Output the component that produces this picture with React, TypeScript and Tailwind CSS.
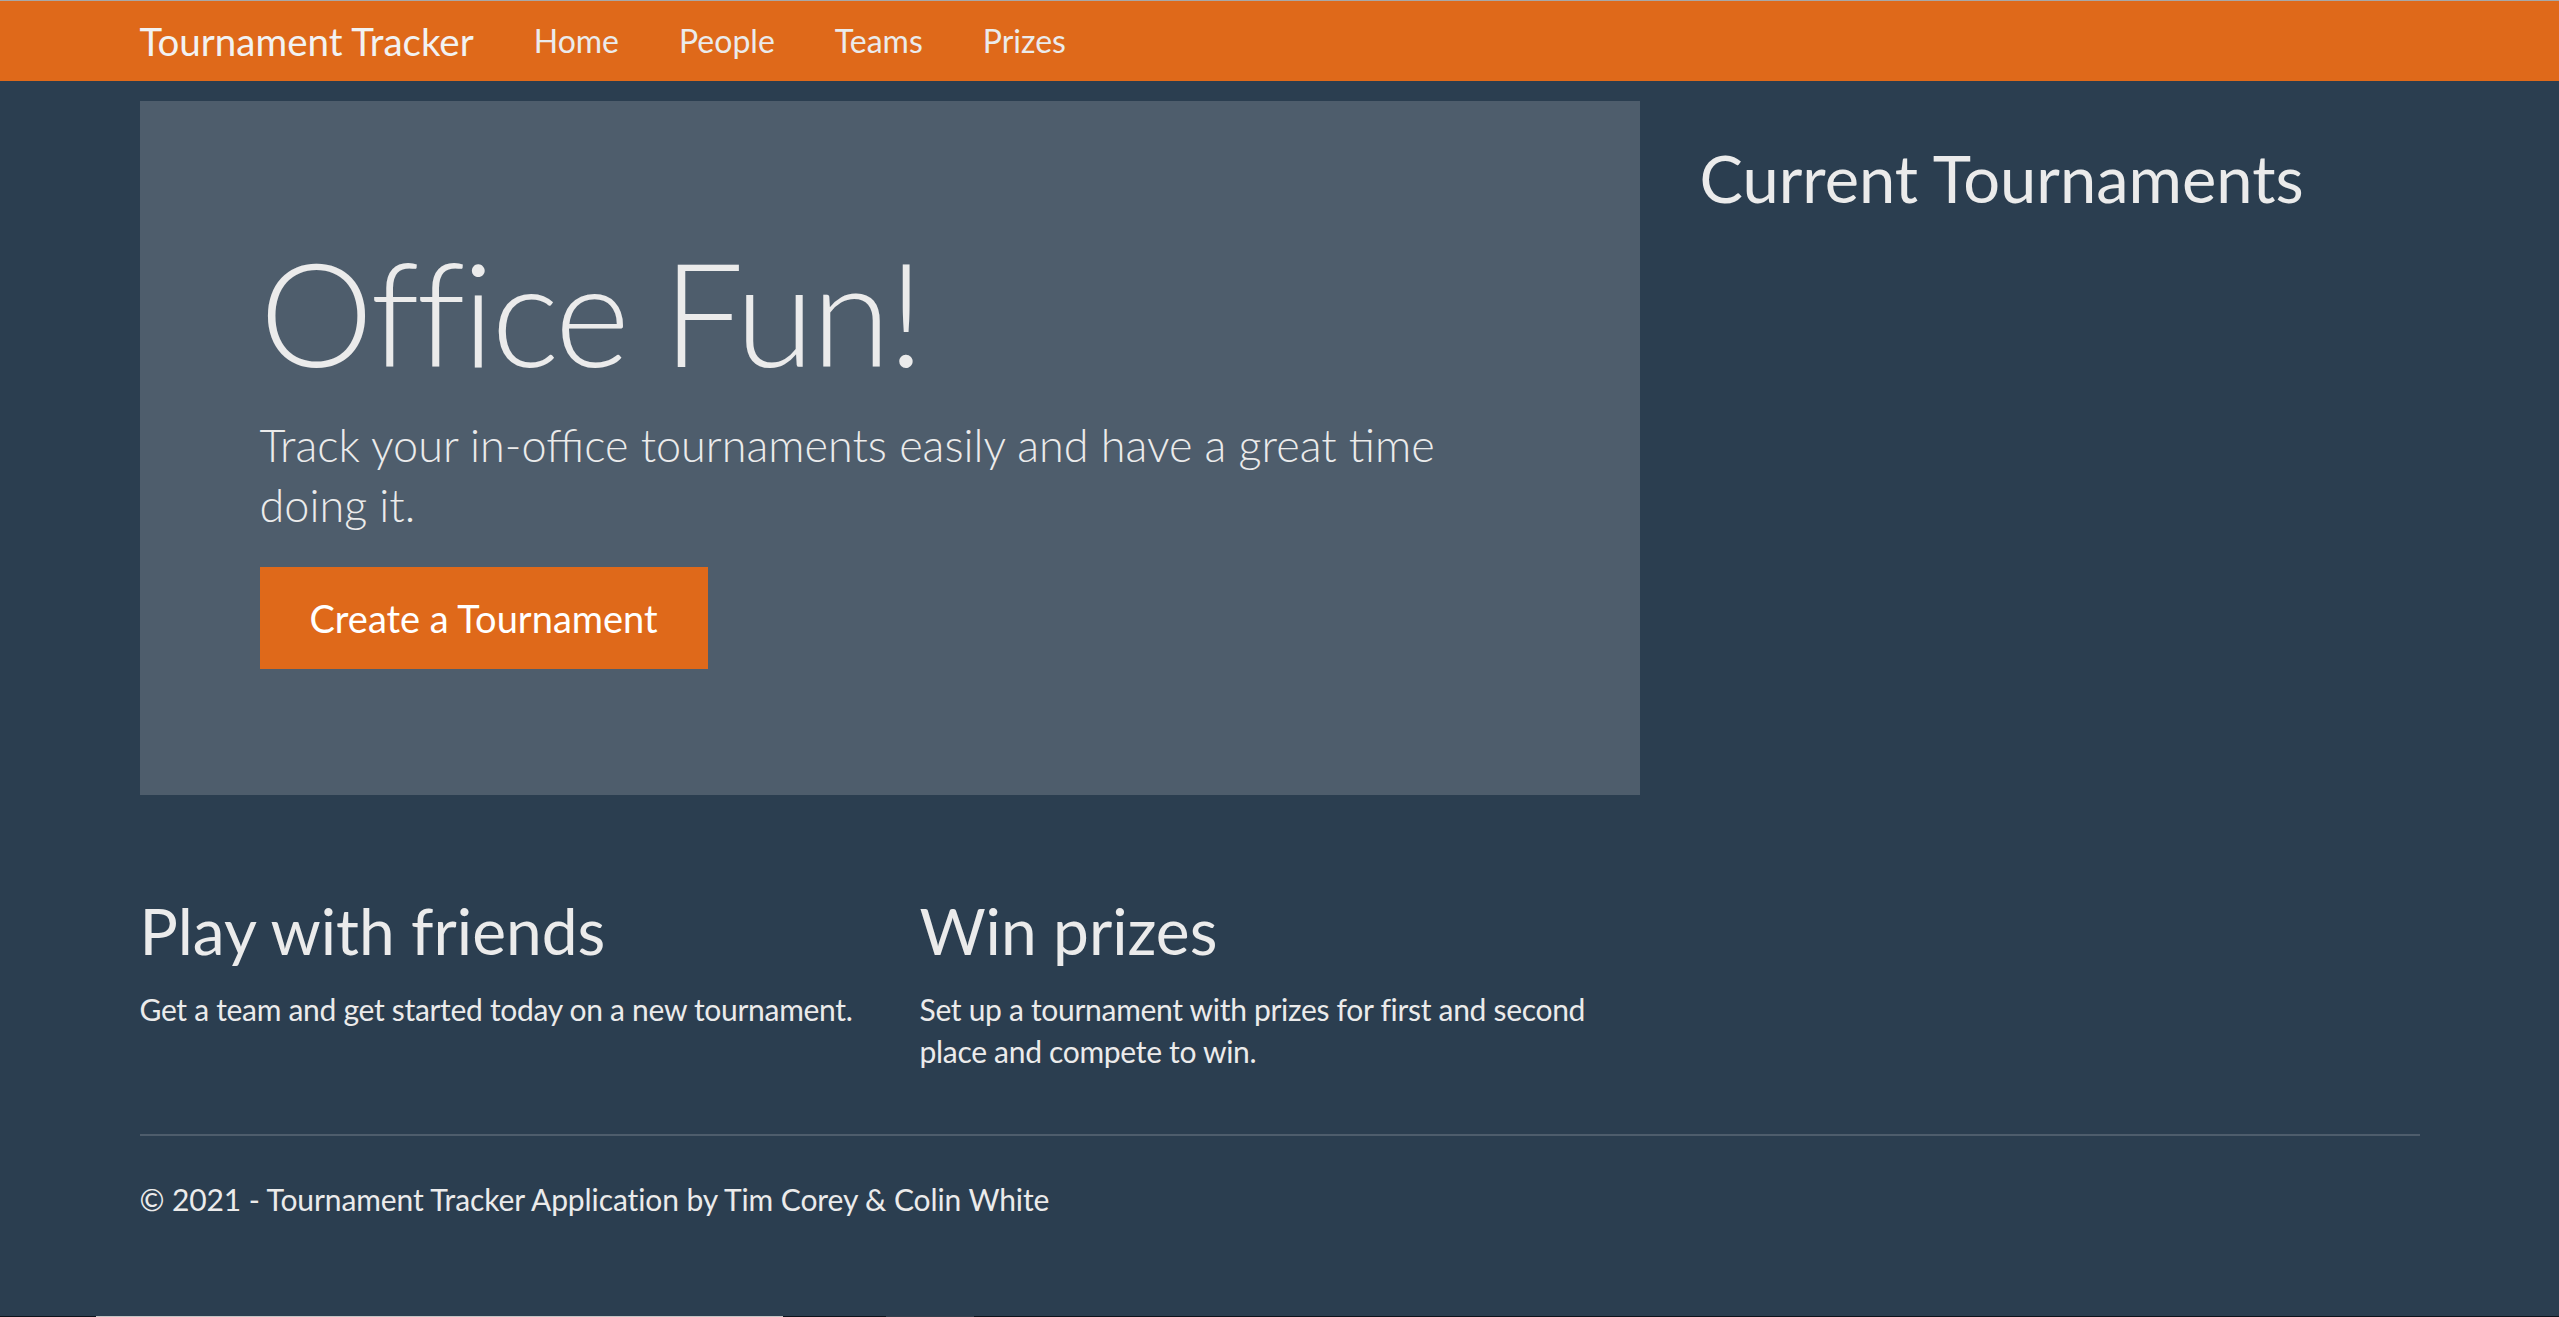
const navLinks = ["Home", "People", "Teams", "Prizes"];

const features = [
  {
    title: "Play with friends",
    text: "Get a team and get started today on a new tournament.",
  },
  {
    title: "Win prizes",
    text: "Set up a tournament with prizes for first and second place and compete to win.",
  },
];

export default function App() {
  return (
    <div className="flex min-h-[1317px] flex-col bg-[#2b3e50] font-[Lato,sans-serif] text-[#ebebeb]">
      {/* window edge */}
      <div className="h-px bg-[#a8a8a8]" />

      {/* Navbar */}
      <nav className="h-[80px] bg-[#df691a]">
        <div className="mx-auto flex h-full w-[2280px] items-center">
          <a href="#" className="mr-[30px] text-[38.5px] leading-[60px] text-[#f2f2f2]">
            Tournament Tracker
          </a>
          {navLinks.map((link) => (
            <a
              key={link}
              href="#"
              className="px-[30px] text-[32px] leading-[48px] text-[#ebebeb]"
            >
              {link}
            </a>
          ))}
        </div>
      </nav>

      <main className="mx-auto w-[2280px]">
        <div className="grid grid-cols-[1500px_720px] gap-x-[60px]">
          {/* Left column */}
          <div>
            {/* Jumbotron */}
            <div className="mt-[20px] bg-[#4e5d6c] px-[120px] pb-[126px] pt-[125px]">
              <h1 className="mb-[16px] text-[144px] font-light leading-[1.2] tracking-[-0.021em]">
                Office Fun!
              </h1>
              <p className="mb-[32px] text-[45px] font-light leading-[60px]">
                Track your in-office tournaments easily and have a great time
                doing it.
              </p>
              <a
                href="#"
                className="inline-block bg-[#df691a] px-[50px] py-[23px] text-[38px] leading-[56px] text-white"
              >
                Create a Tournament
              </a>
            </div>

            {/* Features */}
            <div className="mt-[98px] grid grid-cols-2 gap-x-[60px]">
              {features.map((f) => (
                <div key={f.title}>
                  <h2 className="mb-[18px] text-[64px] leading-[1.2]">
                    {f.title}
                  </h2>
                  <p className="text-[30px] leading-[42px] tracking-[-0.01em]">
                    {f.text}
                  </p>
                </div>
              ))}
            </div>
          </div>

          {/* Right column */}
          <div>
            <h2 className="mt-[58px] text-[65px] leading-[1.2]">
              Current Tournaments
            </h2>
          </div>
        </div>

        <hr className="mt-[62px] border-0 border-t-2 border-[#4e5d6c]" />

        <footer className="mt-[42px] text-[30px] leading-[42px] tracking-[-0.1px]">
          © 2021 - Tournament Tracker Application by Tim Corey &amp; Colin White
        </footer>
      </main>

      <div className="flex-1" />

      {/* bottom scrollbar edge */}
      <div className="flex h-px">
        <div className="w-[96px] bg-[#0d141c]" />
        <div className="w-[687px] bg-[#c4c4c4]" />
        <div className="w-[103px] bg-[#0d141c]" />
        <div className="w-[88px] bg-[#35404c]" />
        <div className="flex-1 bg-[#0d141c]" />
      </div>
    </div>
  );
}
